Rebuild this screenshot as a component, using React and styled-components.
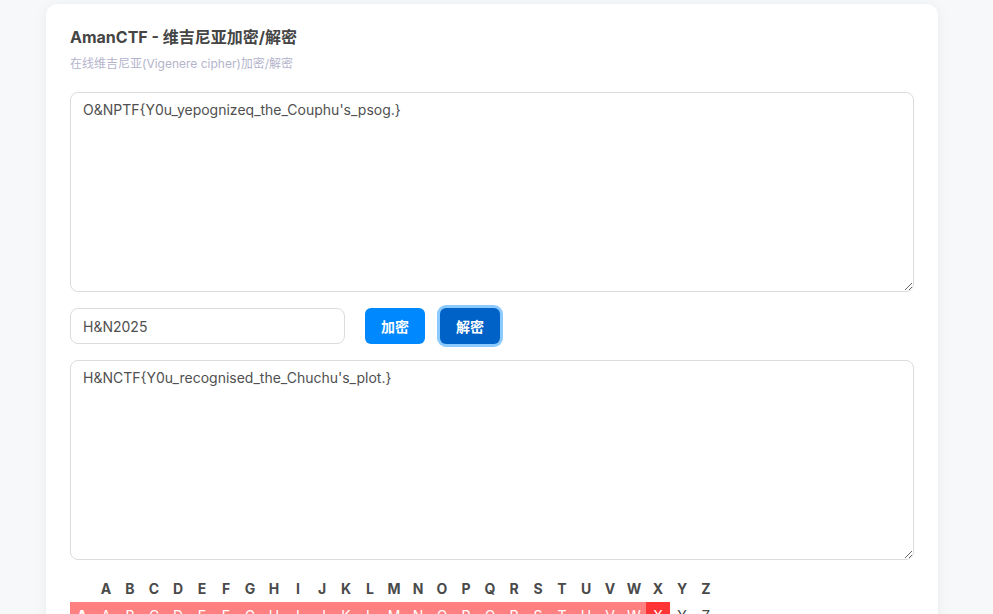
import React from 'react';
import styled, { createGlobalStyle } from 'styled-components';

const Global = createGlobalStyle`
    html, body {
        margin: 0;
        padding: 0;
        background: #f7f8fa;
        font-family: Inter, "Noto Sans CJK SC", sans-serif;
        color: #4a4a4a;
    }
`;

const Page = styled.div`
    padding: 4px 55px 0 46px;
    height: 614px;
    overflow: hidden;
    box-sizing: border-box;
`;

const Card = styled.div`
    background: #fff;
    border-radius: 12px;
    box-shadow: 0 2px 14px rgba(0, 0, 0, 0.06);
    padding: 24px 24px 40px;
`;

const Title = styled.h1`
    margin: 0;
    font-size: 16px;
    line-height: 18px;
    font-weight: 700;
    color: #454545;
`;

const Subtitle = styled.p`
    margin: 10px 0 0;
    font-size: 12px;
    line-height: 16px;
    color: #b4b4cc;
`;

const TextBox = styled.textarea`
    display: block;
    width: 100%;
    height: 200px;
    box-sizing: border-box;
    margin-top: ${p => p.$top}px;
    padding: 8px 12px;
    border: 1px solid #dcdcdc;
    border-radius: 8px;
    font-family: Inter, "Noto Sans CJK SC", sans-serif;
    font-size: 14px;
    line-height: 17px;
    color: #505050;
    resize: vertical;
    outline: none;
`;

const Row = styled.div`
    display: flex;
    align-items: center;
    margin-top: 16px;
`;

const KeyInput = styled.input`
    width: 275px;
    height: 36px;
    box-sizing: border-box;
    padding: 0 12px;
    border: 1px solid #dcdcdc;
    border-radius: 8px;
    font-family: Inter, "Noto Sans CJK SC", sans-serif;
    font-size: 14px;
    color: #505050;
    outline: none;
    margin-right: 20px;
`;

const Button = styled.button`
    width: 60px;
    height: 36px;
    border: none;
    border-radius: 6px;
    background: ${p => (p.$active ? '#0062c6' : '#0088ff')};
    box-shadow: ${p => (p.$active ? '0 0 0 3px rgba(0, 136, 255, 0.45)' : 'none')};
    color: #fff;
    font-family: Inter, "Noto Sans CJK SC", sans-serif;
    font-size: 14px;
    font-weight: 700;
    margin-right: 15px;
    cursor: pointer;
`;

const Table = styled.table`
    border-collapse: collapse;
    margin-top: 14px;
`;

const HeadRow = styled.tr`
    height: 28px;
`;

const Cell = styled.td`
    width: 24px;
    height: 26px;
    padding: 0;
    text-align: center;
    font-size: 14px;
    font-weight: ${p => (p.$bold ? 700 : 400)};
    background: ${p => p.$bg || 'transparent'};
    color: ${p => p.$color || '#4a4a4a'};
`;

const letters = 'ABCDEFGHIJKLMNOPQRSTUVWXYZ'.split('');

function App() {
    const highlight = 23;

    const cellBg = (i) => {
        if (i === highlight) return '#ff3535';
        if (i < highlight) return '#ff8080';
        return null;
    };

    return (
        <Page>
            <Global />
            <Card>
                <Title>AmanCTF - 维吉尼亚加密/解密</Title>
                <Subtitle>在线维吉尼亚(Vigenere cipher)加密/解密</Subtitle>
                <TextBox $top={20} defaultValue="O&NPTF{Y0u_yepognizeq_the_Couphu's_psog.}" />
                <Row>
                    <KeyInput defaultValue="H&N2025" />
                    <Button>加密</Button>
                    <Button $active>解密</Button>
                </Row>
                <TextBox $top={16} defaultValue="H&NCTF{Y0u_recognised_the_Chuchu's_plot.}" />
                <Table>
                    <tbody>
                        <HeadRow>
                            <Cell />
                            {letters.map(l => <Cell key={l} $bold>{l}</Cell>)}
                        </HeadRow>
                        <tr>
                            <Cell $bold $bg="#ff8080" $color="#fff">A</Cell>
                            {letters.map((l, i) => (
                                <Cell key={l} $bg={cellBg(i)} $color={cellBg(i) ? '#fff' : '#4a4a4a'}>{l}</Cell>
                            ))}
                        </tr>
                    </tbody>
                </Table>
            </Card>
        </Page>
    );
}

export default App;
